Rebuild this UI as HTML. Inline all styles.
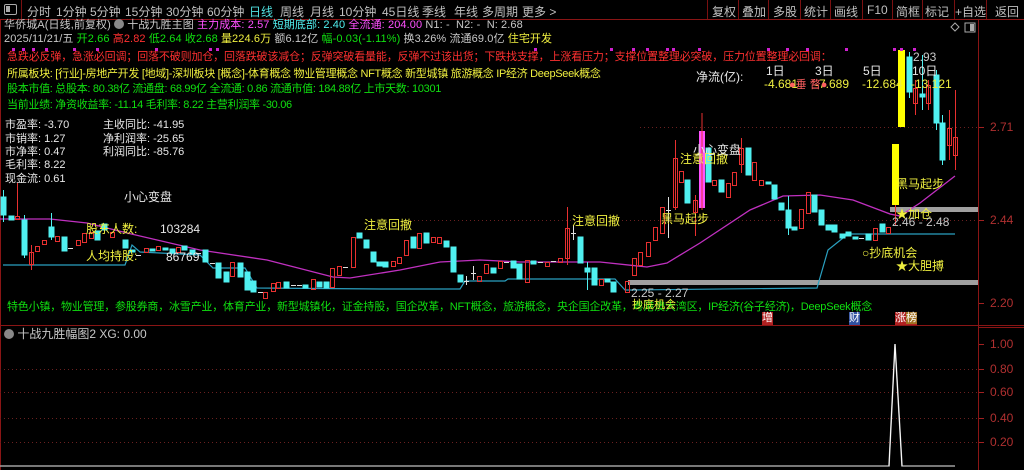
<!DOCTYPE html>
<html><head><meta charset="utf-8">
<style>
html,body{margin:0;padding:0;background:#000;}
body{width:1024px;height:470px;position:relative;overflow:hidden;font-family:"Liberation Sans","Noto Sans CJK SC",sans-serif;font-size:11px;}
.t{position:absolute;white-space:nowrap;line-height:14px;font-size:11px;}
.n{letter-spacing:-0.3px}
.g{color:#c8c8c8}.r{color:#ff3030}.y{color:#f0f040}.gr{color:#10e010}.m{color:#ff50ff}.c{color:#50f0f0}.w{color:#e8e8e8}
.tb{position:absolute;top:3px;color:#c0c0c0;font-size:12px;white-space:nowrap;}
.sep{position:absolute;top:0;width:1px;height:19px;background:#7a1010;}
.ax{position:absolute;color:#b03030;font-size:12px;left:990px;}
</style></head><body>
<div style="position:absolute;left:0;top:0;width:1024px;height:19px;background:#000;border-bottom:1px solid #8a1515;"></div>
<div style="position:absolute;left:4px;top:4px;width:11px;height:9px;border:1px solid #aaa;border-radius:2px;"></div>
<div style="position:absolute;left:6px;top:6px;width:4px;height:6px;background:#aaa;"></div>
<div class="sep" style="left:21px"></div>
<span class="tb" style="left:27px">分时</span>
<span class="tb" style="left:56px">1分钟</span>
<span class="tb" style="left:90px">5分钟</span>
<span class="tb" style="left:125px">15分钟</span>
<span class="tb" style="left:166px">30分钟</span>
<span class="tb" style="left:207px">60分钟</span>
<span class="tb" style="left:249px;color:#50e0e0">日线</span>
<span class="tb" style="left:280px">周线</span>
<span class="tb" style="left:310px">月线</span>
<span class="tb" style="left:339px">10分钟</span>
<span class="tb" style="left:382px">45日线</span>
<span class="tb" style="left:422px">季线</span>
<span class="tb" style="left:454px">年线</span>
<span class="tb" style="left:482px">多周期</span>
<span class="tb" style="left:522px">更多 &gt;</span>
<div class="sep" style="left:707px"></div><span class="tb" style="left:712px">复权</span>
<div class="sep" style="left:738px"></div><span class="tb" style="left:742px">叠加</span>
<div class="sep" style="left:768px"></div><span class="tb" style="left:773px">多股</span>
<div class="sep" style="left:800px"></div><span class="tb" style="left:804px">统计</span>
<div class="sep" style="left:830px"></div><span class="tb" style="left:834px">画线</span>
<div class="sep" style="left:862px"></div><span class="tb" style="left:867px">F10</span>
<div class="sep" style="left:892px"></div><span class="tb" style="left:896px">简框</span>
<div class="sep" style="left:922px"></div><span class="tb" style="left:925px">标记</span>
<div class="sep" style="left:954px"></div><span class="tb" style="left:955px">+自选</span>
<div class="sep" style="left:986px"></div><span class="tb" style="left:995px">返回</span>

<div style="position:absolute;left:0;top:20px;width:1px;height:450px;background:#8a1515"></div>
<div style="position:absolute;left:978px;top:20px;width:1px;height:450px;background:#8a1515"></div>
<div style="position:absolute;left:0;top:325px;width:1024px;height:1px;background:#8a1515"></div>
<div style="position:absolute;left:978px;top:327px;width:46px;height:1px;background:#8a1515"></div>

<svg width="1024" height="470" style="position:absolute;left:0;top:0" xmlns="http://www.w3.org/2000/svg">
<g stroke="#6a2020" stroke-dasharray="1,3" stroke-width="1">
<line x1="640" y1="127.5" x2="978" y2="127.5"/>
<line x1="410" y1="220.5" x2="978" y2="220.5"/>
<line x1="0" y1="369.5" x2="978" y2="369.5"/>
<line x1="0" y1="392.5" x2="978" y2="392.5"/>
<line x1="0" y1="418.5" x2="978" y2="418.5"/>
<line x1="0" y1="442.5" x2="978" y2="442.5"/>
</g>
<g stroke="#a02020"><line x1="979" y1="127.5" x2="984" y2="127.5"/><line x1="979" y1="220.5" x2="984" y2="220.5"/><line x1="979" y1="303.5" x2="984" y2="303.5"/>
<line x1="979" y1="344.5" x2="984" y2="344.5"/><line x1="979" y1="369.5" x2="984" y2="369.5"/><line x1="979" y1="392.5" x2="984" y2="392.5"/><line x1="979" y1="418.5" x2="984" y2="418.5"/><line x1="979" y1="442.5" x2="984" y2="442.5"/></g>
<rect x="628" y="280" width="350" height="5" fill="#a0a0a0"/>
<rect x="890" y="207" width="88" height="5" fill="#a0a0a0"/>
<polyline fill="none" stroke="#2aa0c0" stroke-width="1.2" points="3,265 125,265 132,245 140,252 200,255 213,268 245,268 257,288 380,289 460,289 465,281 505,281 508,279 615,279 625,290 630,290 817,288 828,250 848,234 955,234"/>
<polyline fill="none" stroke="#c030c0" stroke-width="1.3" points="0,219 50,219 87,223 127,233 200,250 267,260 333,277 350,278 400,270 440,262 480,260 520,262 600,262 647,267 667,263 700,243 750,210 783,196 820,195 853,200 890,214 900,216 920,203 955,176"/>
<g stroke-width="1">
<g fill="#50f0f0" stroke="#50f0f0">
<line x1="3.5" y1="190" x2="3.5" y2="222"/><rect x="1" y="197" width="5" height="18"/>
<rect x="9" y="216" width="5" height="4"/>
<line x1="24.5" y1="215" x2="24.5" y2="258"/><rect x="22" y="220" width="5" height="35"/>
<line x1="51.5" y1="213" x2="51.5" y2="240"/><rect x="49" y="227" width="5" height="10"/>
<rect x="62" y="237" width="5" height="14"/>
<rect x="95" y="231" width="5" height="9"/><rect x="102" y="224" width="5" height="6"/>
<rect x="123" y="240" width="5" height="8"/><rect x="130" y="250" width="5" height="2"/>
<rect x="150" y="249" width="5" height="2"/><rect x="163" y="248" width="5" height="2"/><rect x="170" y="249" width="5" height="4"/>
<rect x="182" y="246" width="5" height="4"/><rect x="190" y="250" width="5" height="4"/>
<rect x="203" y="250" width="5" height="12"/><rect x="216" y="263" width="5" height="15"/>
<rect x="224" y="272" width="5" height="10"/><rect x="238" y="263" width="5" height="14"/>
<rect x="245" y="272" width="5" height="18"/><rect x="251" y="281" width="5" height="11"/>
<rect x="284" y="282" width="5" height="6"/><rect x="303" y="285" width="5" height="3"/>
<rect x="317" y="282" width="5" height="5"/><rect x="324" y="282" width="5" height="6"/>
<rect x="357" y="233" width="5" height="5"/><rect x="364" y="240" width="5" height="8"/>
<rect x="371" y="252" width="5" height="10"/><rect x="377" y="262" width="5" height="4"/>
<rect x="383" y="262" width="5" height="5"/><rect x="411" y="237" width="5" height="11"/>
<rect x="424" y="233" width="5" height="10"/><rect x="444" y="241" width="5" height="6"/>
<rect x="451" y="247" width="5" height="25"/><rect x="458" y="275" width="5" height="7"/>
<rect x="491" y="268" width="5" height="5"/><rect x="511" y="261" width="5" height="7"/>
<rect x="517" y="264" width="5" height="15"/><rect x="531" y="261" width="5" height="3"/>
<rect x="578" y="237" width="5" height="26"/><line x1="587.5" y1="262" x2="587.5" y2="290"/><rect x="585" y="268" width="5" height="4"/>
<rect x="592" y="268" width="5" height="17"/><rect x="605" y="279" width="5" height="3"/>
<rect x="611" y="282" width="5" height="10"/>
<rect x="685" y="180" width="5" height="23"/><rect x="706" y="148" width="5" height="34"/>
<rect x="719" y="180" width="5" height="12"/><rect x="746" y="148" width="5" height="27"/>
<rect x="766" y="182" width="5" height="2"/><rect x="772" y="185" width="5" height="14"/>
<rect x="779" y="203" width="5" height="7"/><line x1="788.5" y1="196" x2="788.5" y2="235"/><rect x="786" y="210" width="5" height="18"/>
<rect x="792" y="227" width="5" height="3"/><rect x="812" y="195" width="5" height="17"/>
<rect x="819" y="210" width="5" height="15"/><rect x="826" y="225" width="5" height="5"/>
<rect x="832" y="225" width="5" height="7"/><rect x="840" y="234" width="5" height="4"/>
<rect x="846" y="232" width="5" height="4"/><rect x="853" y="237" width="5" height="2"/>
<rect x="866" y="234" width="5" height="6"/><rect x="880" y="224" width="5" height="8"/>
<line x1="909.5" y1="52" x2="909.5" y2="98"/><rect x="907" y="57" width="5" height="35"/>
<line x1="922.5" y1="55" x2="922.5" y2="110"/><rect x="920" y="94" width="5" height="3"/>
<line x1="936.5" y1="70" x2="936.5" y2="130"/><rect x="934" y="75" width="5" height="48"/>
<line x1="942.5" y1="115" x2="942.5" y2="165"/><rect x="940" y="123" width="5" height="37"/>
</g>
<g fill="none" stroke="#e83030">
<rect x="15.5" y="216.5" width="4" height="3"/><line x1="17.5" y1="183" x2="17.5" y2="216"/>
<line x1="31.5" y1="245" x2="31.5" y2="270"/><rect x="29.5" y="252.5" width="4" height="12"/>
<rect x="35.5" y="246.5" width="4" height="5"/><rect x="42.5" y="240.5" width="4" height="4"/>
<rect x="55.5" y="236.5" width="4" height="5"/><rect x="76.5" y="240.5" width="4" height="5"/>
<rect x="82.5" y="233.5" width="4" height="9"/><rect x="89.5" y="232.5" width="4" height="6"/>
<rect x="110.5" y="232.5" width="4" height="5"/><rect x="144.5" y="248.5" width="4" height="4"/>
<rect x="156.5" y="246.5" width="4" height="4"/><rect x="176.5" y="247.5" width="4" height="5"/>
<rect x="230.5" y="262.5" width="4" height="14"/>
<rect x="263.5" y="292.5" width="4" height="6"/><rect x="271.5" y="283.5" width="4" height="8"/>
<rect x="276.5" y="282.5" width="4" height="6"/><rect x="311.5" y="279.5" width="4" height="10"/>
<rect x="330.5" y="268.5" width="4" height="19"/><rect x="337.5" y="266.5" width="4" height="9"/>
<rect x="351.5" y="237.5" width="4" height="30"/>
<rect x="391.5" y="261.5" width="4" height="5"/><rect x="397.5" y="257.5" width="4" height="6"/>
<rect x="404.5" y="240.5" width="4" height="15"/><rect x="417.5" y="233.5" width="4" height="15"/>
<rect x="431.5" y="237.5" width="4" height="5"/><rect x="437.5" y="237.5" width="4" height="6"/>
<rect x="477.5" y="276.5" width="4" height="5"/><rect x="484.5" y="264.5" width="4" height="9"/>
<rect x="498.5" y="261.5" width="4" height="7"/><rect x="525.5" y="260.5" width="4" height="22"/>
<rect x="545.5" y="262.5" width="4" height="4"/><rect x="558.5" y="258.5" width="4" height="4"/>
<line x1="567.5" y1="207" x2="567.5" y2="265"/><rect x="565.5" y="228.5" width="4" height="30"/>
<rect x="599.5" y="279.5" width="4" height="6"/>
<rect x="625.5" y="281.5" width="4" height="11"/><rect x="632.5" y="258.5" width="4" height="17"/>
<rect x="638.5" y="252.5" width="4" height="13"/><rect x="646.5" y="242.5" width="4" height="14"/>
<rect x="653.5" y="227.5" width="4" height="13"/><rect x="660.5" y="207.5" width="4" height="26"/>
<line x1="675.5" y1="140" x2="675.5" y2="210"/><rect x="673.5" y="158.5" width="4" height="49"/>
<rect x="679.5" y="171.5" width="4" height="11"/>
<line x1="695.5" y1="195" x2="695.5" y2="236"/><rect x="693.5" y="200.5" width="4" height="12"/>
<rect x="712.5" y="180.5" width="4" height="5"/><rect x="726.5" y="183.5" width="4" height="14"/>
<rect x="732.5" y="172.5" width="4" height="13"/><line x1="741.5" y1="138" x2="741.5" y2="173"/><rect x="739.5" y="148.5" width="4" height="16"/>
<rect x="752.5" y="162.5" width="4" height="18"/><rect x="759.5" y="180.5" width="4" height="5"/>
<rect x="799.5" y="209.5" width="4" height="19"/><rect x="806.5" y="192.5" width="4" height="21"/>
<rect x="873.5" y="228.5" width="4" height="12"/><rect x="886.5" y="227.5" width="4" height="6"/>
<line x1="895.5" y1="205" x2="895.5" y2="225"/>
<line x1="915.5" y1="80" x2="915.5" y2="115"/><rect x="913.5" y="88.5" width="4" height="15"/>
<line x1="928.5" y1="80" x2="928.5" y2="110"/><rect x="926.5" y="85.5" width="4" height="18"/>
<line x1="949.5" y1="110" x2="949.5" y2="160"/><rect x="947.5" y="128.5" width="4" height="17"/>
<line x1="955.5" y1="90" x2="955.5" y2="170"/><rect x="953.5" y="137.5" width="4" height="18"/>
</g>
<g stroke="#e0e0e0">
<line x1="68" y1="248.5" x2="73" y2="248.5"/><line x1="136" y1="255.5" x2="141" y2="255.5"/><line x1="196" y1="253.5" x2="201" y2="253.5"/>
<line x1="210" y1="263.5" x2="215" y2="263.5"/><line x1="258" y1="292.5" x2="263" y2="292.5"/><line x1="291" y1="285.5" x2="296" y2="285.5"/>
<line x1="297" y1="285.5" x2="302" y2="285.5"/><line x1="343" y1="267.5" x2="348" y2="267.5"/>
<line x1="464" y1="281.5" x2="469" y2="281.5"/><line x1="466.5" y1="276" x2="466.5" y2="285"/><line x1="471" y1="273.5" x2="476" y2="273.5"/><line x1="473.5" y1="266" x2="473.5" y2="280"/>
<line x1="504" y1="262.5" x2="509" y2="262.5"/><line x1="538" y1="262.5" x2="543" y2="262.5"/><line x1="551" y1="261.5" x2="556" y2="261.5"/>
<line x1="571" y1="233.5" x2="576" y2="233.5"/><line x1="573.5" y1="225" x2="573.5" y2="240"/>
<line x1="666" y1="210.5" x2="671" y2="210.5"/><line x1="668.5" y1="197" x2="668.5" y2="238"/>
<line x1="859" y1="238.5" x2="864" y2="238.5"/>
</g>
<rect x="699" y="131" width="6" height="77" fill="#ff50ff"/>
<line x1="702" y1="113" x2="702" y2="210" stroke="#e83030"/>
<rect x="892" y="144" width="7" height="61" fill="#ffff00"/>
<rect x="898" y="50" width="7" height="77" fill="#ffff00"/>
</g>
<polyline fill="none" stroke="#a0a0a0" stroke-width="1.5" points="0,466 889,466 895,344 902,466 955,466"/>
<polyline fill="none" stroke="#ffffff" stroke-width="1" points="889,466 895,344 902,466"/>
<g fill="#d020d0">
<rect x="12" y="48" width="3" height="3"/><rect x="22" y="48" width="3" height="3"/><rect x="32" y="48" width="3" height="3"/><rect x="45" y="48" width="3" height="3"/>
<rect x="73" y="48" width="3" height="3"/><rect x="96" y="48" width="3" height="3"/><rect x="155" y="48" width="3" height="3"/><rect x="209" y="48" width="3" height="3"/><rect x="216" y="48" width="3" height="3"/>
<rect x="534" y="48" width="3" height="3"/><rect x="610" y="48" width="3" height="3"/><rect x="632" y="48" width="3" height="3"/><rect x="646" y="48" width="3" height="3"/><rect x="666" y="48" width="3" height="3"/><rect x="672" y="48" width="3" height="3"/><rect x="698" y="48" width="3" height="3"/>
<rect x="767" y="48" width="3" height="3"/><rect x="786" y="48" width="3" height="3"/><rect x="806" y="48" width="3" height="3"/><rect x="845" y="48" width="3" height="3"/><rect x="893" y="48" width="3" height="3"/><rect x="900" y="48" width="3" height="3"/><rect x="913" y="48" width="3" height="3"/>
</g>
<path d="M955 23 L959 27 L955 31 L951 27 Z" fill="none" stroke="#aaa"/>
<rect x="965" y="23" width="10" height="9" fill="none" stroke="#aaa"/><rect x="970" y="24" width="4" height="7" fill="#aaa"/>
</svg>

<div class="t" style="left:4px;top:18px;letter-spacing:0.1px"><span class="g">华侨城A(日线,前复权) </span><span class="g" style="display:inline-block;width:10px;height:10px;border-radius:5px;background:#888;vertical-align:-1px"></span><span class="g"> 十战九胜主图 </span><span class="m">主力成本: 2.57 </span><span class="c">短期底部: 2.40 </span><span class="m">全流通: 204.00 </span><span class="g">N1: - &nbsp;N2: - &nbsp;N: 2.68</span></div>
<div class="t" style="left:4px;top:32px;letter-spacing:0.1px"><span class="g">2025/11/21/五 </span><span class="gr">开2.66 </span><span class="r">高2.82 </span><span class="gr">低2.64 收2.68 </span><span class="y">量224.6万 </span><span class="g">额6.12亿 </span><span class="gr">幅-0.03(-1.11%) </span><span class="g">换3.26% 流通69.0亿 </span><span class="y">住宅开发</span></div>
<div class="t r" style="left:7px;top:50px;letter-spacing:-0.15px">急跌必反弹，急涨必回调；回落不破则加仓，回落跌破该减仓；反弹突破看量能，反弹不过该出货；下跌找支撑，上涨看压力；支撑位置整理必突破，压力位置整理必回调：</div>
<div class="t y n" style="left:7px;top:67px">所属板块: [行业]-房地产开发 [地域]-深圳板块 [概念]-体育概念 物业管理概念 NFT概念 新型城镇 旅游概念 IP经济 DeepSeek概念</div>
<div class="t gr n" style="left:7px;top:82px">股本市值: 总股本: 80.38亿 流通盘: 68.99亿 全流通: 0.86 流通市值: 184.88亿 上市天数: 10301</div>
<div class="t gr n" style="left:7px;top:98px">当前业绩: 净资收益率: -11.14 毛利率: 8.22 主营利润率 -30.06</div>
<div class="t w" style="left:5px;top:118px">市盈率: -3.70</div>
<div class="t w" style="left:5px;top:132px">市销率: 1.27</div>
<div class="t w" style="left:5px;top:145px">市净率: 0.47</div>
<div class="t w" style="left:5px;top:158px">毛利率: 8.22</div>
<div class="t w" style="left:5px;top:172px">现金流: 0.61</div>
<div class="t w" style="left:103px;top:118px">主收同比: -41.95</div>
<div class="t w" style="left:103px;top:132px">净利润率: -25.65</div>
<div class="t w" style="left:103px;top:145px">利润同比: -85.76</div>
<div class="t w" style="left:696px;top:70px;font-size:12px">净流(亿):</div>
<div class="t w" style="left:766px;top:64px;font-size:12px">1日</div><div class="t w" style="left:815px;top:64px;font-size:12px">3日</div><div class="t w" style="left:863px;top:64px;font-size:12px">5日</div><div class="t w" style="left:912px;top:64px;font-size:12px">10日</div>
<div class="t y" style="left:764px;top:77px;font-size:12px">-4.681</div><div class="t y" style="left:815px;top:77px;font-size:12px">-7.689</div><div class="t y" style="left:862px;top:77px;font-size:12px">-12.684</div><div class="t y" style="left:911px;top:77px;font-size:12px">-13.121</div>
<div class="t" style="left:789px;top:78px;color:#ff6060">●垂 瞀●</div>
<div class="t g" style="left:913px;top:50px;font-size:12px">2.93</div>
<div class="t w" style="left:124px;top:190px;font-size:12px">小心变盘</div>
<div class="t y" style="left:86px;top:222px;font-size:12px">股东人数:</div><div class="t w" style="left:160px;top:222px;font-size:12px">103284</div>
<div class="t y" style="left:86px;top:249px;font-size:12px">人均持股:</div><div class="t w" style="left:166px;top:250px;font-size:12px">86769</div>
<div class="t y" style="left:364px;top:218px;font-size:12px">注意回撤</div>
<div class="t y" style="left:572px;top:214px;font-size:12px">注意回撤</div>
<div class="t y" style="left:680px;top:152px;font-size:12px">注意回撤</div>
<div class="t w" style="left:693px;top:143px;font-size:12px">小心变盘</div>
<div class="t y" style="left:661px;top:212px;font-size:12px">黑马起步</div>
<div class="t y" style="left:896px;top:177px;font-size:12px">黑马起步</div>
<div class="t y" style="left:896px;top:207px;font-size:12px">★加仓</div>
<div class="t g" style="left:892px;top:215px;font-size:12px">2.46 - 2.48</div>
<div class="t y" style="left:862px;top:246px;font-size:12px">○抄底机会</div>
<div class="t y" style="left:896px;top:259px;font-size:12px">★大胆搏</div>
<div class="t g" style="left:631px;top:286px;font-size:12px">2.25 - 2.27</div>
<div class="t gr" style="left:7px;top:300px;letter-spacing:-0.2px">特色小镇，物业管理，参股券商，冰雪产业，体育产业，新型城镇化，证金持股，国企改革，NFT概念，旅游概念，央企国企改革，粤港澳大湾区，IP经济(谷子经济)，DeepSeek概念</div>
<div class="t y" style="left:632px;top:298px">抄底机会</div>
<div class="t" style="left:762px;top:312px;background:#b02020;color:#fff;font-size:11px;line-height:13px">增</div>
<div class="t" style="left:849px;top:312px;background:#3050a0;color:#fff;font-size:11px;line-height:13px">财</div>
<div class="t" style="left:895px;top:312px;background:#b02020;color:#fff;font-size:11px;line-height:13px">涨<span style="background:#a07020">榜</span></div>
<div class="ax" style="top:120px">2.71</div>
<div class="ax" style="top:213px">2.44</div>
<div class="ax" style="top:296px">2.20</div>
<div class="ax" style="top:337px">1.00</div>
<div class="ax" style="top:362px">0.80</div>
<div class="ax" style="top:385px">0.60</div>
<div class="ax" style="top:411px">0.40</div>
<div class="ax" style="top:435px">0.20</div>
<div class="t g" style="left:4px;top:327px;font-size:12px"><span style="display:inline-block;width:10px;height:10px;border-radius:5px;background:#888;vertical-align:-1px"></span> 十战九胜幅图2 XG: 0.00</div>
</body></html>
